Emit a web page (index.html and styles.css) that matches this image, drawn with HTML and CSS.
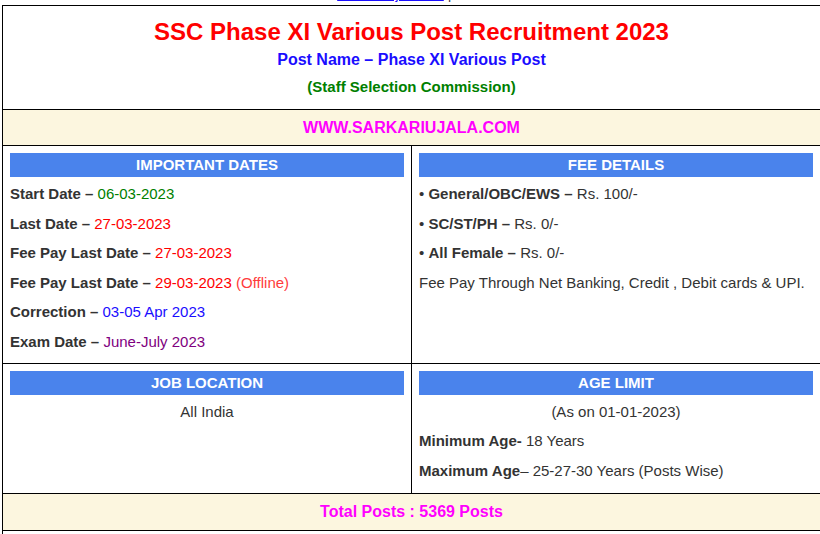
FILE: index.html
```html
<!DOCTYPE html>
<html>
<head>
<meta charset="utf-8">
<link rel="stylesheet" href="styles.css">
</head>
<body>
<p class="crumb"><a href="#" class="crumb-link">Sarkari Ujala Job</a> | <span class="crumb-tag">Jobs</span></p>
<table class="post">
  <tr>
    <td colspan="2" class="head">
      <h1 class="title">SSC Phase XI Various Post Recruitment 2023</h1>
      <div class="postname">Post Name – Phase XI Various Post</div>
      <div class="org">(Staff Selection Commission)</div>
    </td>
  </tr>
  <tr>
    <td colspan="2" class="band">WWW.SARKARIUJALA.COM</td>
  </tr>
  <tr>
    <td class="cell">
      <div class="bar">IMPORTANT DATES</div>
      <div class="line"><b>Start Date –</b> <span class="green">06-03-2023</span></div>
      <div class="line"><b>Last Date –</b> <span class="red">27-03-2023</span></div>
      <div class="line"><b>Fee Pay Last Date –</b> <span class="red">27-03-2023</span></div>
      <div class="line"><b>Fee Pay Last Date –</b> <span class="red">29-03-2023</span> <span class="lightred">(Offline)</span></div>
      <div class="line"><b>Correction –</b> <span class="blue">03-05 Apr 2023</span></div>
      <div class="line"><b>Exam Date –</b> <span class="purple">June-July 2023</span></div>
    </td>
    <td class="cell">
      <div class="bar">FEE DETAILS</div>
      <div class="line">• <b>General/OBC/EWS –</b> Rs. 100/-</div>
      <div class="line">• <b>SC/ST/PH –</b> Rs. 0/-</div>
      <div class="line">• <b>All Female –</b> Rs. 0/-</div>
      <div class="line">Fee Pay Through Net Banking, Credit , Debit cards &amp; UPI.</div>
    </td>
  </tr>
  <tr>
    <td class="cell cell-low">
      <div class="bar">JOB LOCATION</div>
      <div class="line center">All India</div>
    </td>
    <td class="cell cell-low">
      <div class="bar">AGE LIMIT</div>
      <div class="line center">(As on 01-01-2023)</div>
      <div class="line"><b>Minimum Age-</b> 18 Years</div>
      <div class="line"><b>Maximum Age</b>– 25-27-30 Years (Posts Wise)</div>
    </td>
  </tr>
  <tr>
    <td colspan="2" class="band total">Total Posts : 5369 Posts</td>
  </tr>
  <tr>
    <td colspan="2" class="empty"></td>
  </tr>
</table>
</body>
</html>
```
FILE: styles.css
```css
html, body {
  overflow: hidden;
}
body {
  margin: 0;
  padding-left: 2px;
  font-family: "Liberation Sans", Arial, sans-serif;
  font-size: 15px;
  color: #333;
  background: #fff;
  width: 818px;
}
.crumb {
  margin: -13px 0 0 0;
  height: 18px;
  line-height: 15px;
  text-align: center;
  font-size: 14px;
}
.crumb-link {
  color: #1a0dff;
}
.crumb-tag {
  color: #e08040;
}
.post {
  border-collapse: collapse;
  width: 819px;
  table-layout: fixed;
}
.post td {
  border: 1px solid #000;
  vertical-align: top;
  padding: 0;
}
.post td.head {
  text-align: center;
  padding: 0;
  height: 103px;
}
.title {
  margin: 12px 0 0;
  font-size: 24px;
  line-height: 28px;
  color: #ff0000;
  font-weight: bold;
}
.postname {
  margin-top: 4px;
  font-size: 16px;
  line-height: 20px;
  font-weight: bold;
  color: #1a0dff;
}
.org {
  margin-top: 7px;
  font-size: 15px;
  line-height: 20px;
  font-weight: bold;
  color: #008000;
}
.post td.band {
  background: #fcf6df;
  text-align: center;
  font-size: 16px;
  font-weight: bold;
  color: #ff00ff;
  height: 35px;
  vertical-align: middle;
}
.post td.total {
  height: 36px;
}
.post td.cell {
  padding: 7px 7px 6px;
}
.post td.cell-low {
  padding-bottom: 8px;
}
.bar {
  background: #4a83ec;
  color: #fff;
  font-weight: bold;
  text-align: center;
  height: 24px;
  line-height: 24px;
  font-size: 15px;
  margin-bottom: 2px;
}
.line {
  line-height: 29.6px;
}
.center {
  text-align: center;
}
.green { color: #008000; }
.red { color: #ff0000; }
.lightred { color: #ff3b3b; }
.blue { color: #1a0dff; }
.purple { color: #800080; }
.post td.empty {
  height: 30px;
}
```
